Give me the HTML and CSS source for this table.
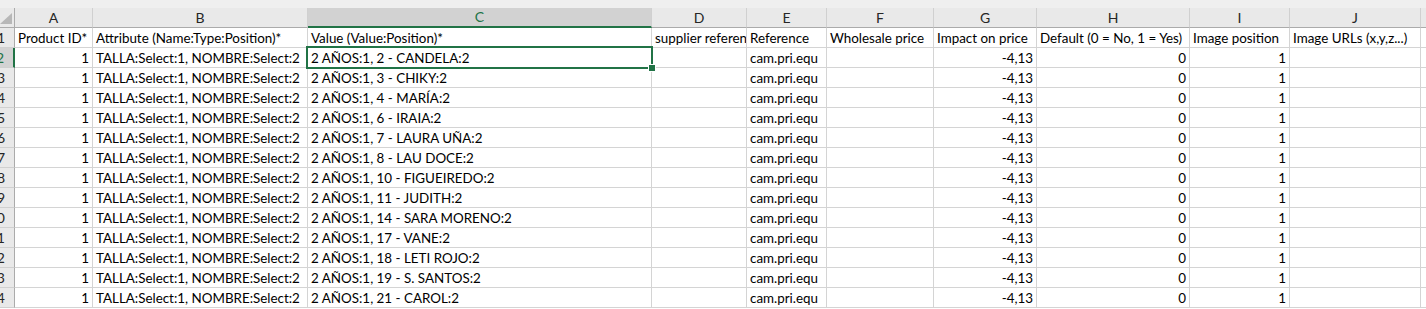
FILE: index.html
```html
<!DOCTYPE html>
<html>
<head>
<meta charset="utf-8">
<link rel="stylesheet" href="styles.css">
</head>
<body>
<div class="sheet">
  <div class="topstrip"></div>
  <div class="grid">
    <div class="corner"><span class="tri"></span></div>
    <div class="ch">A</div><div class="ch">B</div><div class="ch ch-sel">C</div><div class="ch">D</div><div class="ch">E</div><div class="ch">F</div><div class="ch">G</div><div class="ch">H</div><div class="ch">I</div><div class="ch">J</div><div class="ch ch-fill"></div>

    <div class="rh">1</div><div class="c">Product ID*</div><div class="c">Attribute (Name:Type:Position)*</div><div class="c">Value (Value:Position)*</div><div class="c">supplier reference</div><div class="c">Reference</div><div class="c">Wholesale price</div><div class="c">Impact on price</div><div class="c">Default (0 = No, 1 = Yes)</div><div class="c">Image position</div><div class="c">Image URLs (x,y,z...)</div><div class="c fill"></div>

    <div class="rh rh-sel">2</div><div class="c r">1</div><div class="c">TALLA:Select:1, NOMBRE:Select:2</div><div class="c sel">2 AÑOS:1, 2 - CANDELA:2<span class="selbox"><span class="handle"></span></span></div><div class="c"></div><div class="c">cam.pri.equ</div><div class="c"></div><div class="c r">-4,13</div><div class="c r">0</div><div class="c r">1</div><div class="c"></div><div class="c fill"></div>

    <div class="rh">3</div><div class="c r">1</div><div class="c">TALLA:Select:1, NOMBRE:Select:2</div><div class="c">2 AÑOS:1, 3 - CHIKY:2</div><div class="c"></div><div class="c">cam.pri.equ</div><div class="c"></div><div class="c r">-4,13</div><div class="c r">0</div><div class="c r">1</div><div class="c"></div><div class="c fill"></div>

    <div class="rh">4</div><div class="c r">1</div><div class="c">TALLA:Select:1, NOMBRE:Select:2</div><div class="c">2 AÑOS:1, 4 - MARÍA:2</div><div class="c"></div><div class="c">cam.pri.equ</div><div class="c"></div><div class="c r">-4,13</div><div class="c r">0</div><div class="c r">1</div><div class="c"></div><div class="c fill"></div>

    <div class="rh">5</div><div class="c r">1</div><div class="c">TALLA:Select:1, NOMBRE:Select:2</div><div class="c">2 AÑOS:1, 6 - IRAIA:2</div><div class="c"></div><div class="c">cam.pri.equ</div><div class="c"></div><div class="c r">-4,13</div><div class="c r">0</div><div class="c r">1</div><div class="c"></div><div class="c fill"></div>

    <div class="rh">6</div><div class="c r">1</div><div class="c">TALLA:Select:1, NOMBRE:Select:2</div><div class="c">2 AÑOS:1, 7 - LAURA UÑA:2</div><div class="c"></div><div class="c">cam.pri.equ</div><div class="c"></div><div class="c r">-4,13</div><div class="c r">0</div><div class="c r">1</div><div class="c"></div><div class="c fill"></div>

    <div class="rh">7</div><div class="c r">1</div><div class="c">TALLA:Select:1, NOMBRE:Select:2</div><div class="c">2 AÑOS:1, 8 - LAU DOCE:2</div><div class="c"></div><div class="c">cam.pri.equ</div><div class="c"></div><div class="c r">-4,13</div><div class="c r">0</div><div class="c r">1</div><div class="c"></div><div class="c fill"></div>

    <div class="rh">8</div><div class="c r">1</div><div class="c">TALLA:Select:1, NOMBRE:Select:2</div><div class="c">2 AÑOS:1, 10 - FIGUEIREDO:2</div><div class="c"></div><div class="c">cam.pri.equ</div><div class="c"></div><div class="c r">-4,13</div><div class="c r">0</div><div class="c r">1</div><div class="c"></div><div class="c fill"></div>

    <div class="rh">9</div><div class="c r">1</div><div class="c">TALLA:Select:1, NOMBRE:Select:2</div><div class="c">2 AÑOS:1, 11 - JUDITH:2</div><div class="c"></div><div class="c">cam.pri.equ</div><div class="c"></div><div class="c r">-4,13</div><div class="c r">0</div><div class="c r">1</div><div class="c"></div><div class="c fill"></div>

    <div class="rh">10</div><div class="c r">1</div><div class="c">TALLA:Select:1, NOMBRE:Select:2</div><div class="c">2 AÑOS:1, 14 - SARA MORENO:2</div><div class="c"></div><div class="c">cam.pri.equ</div><div class="c"></div><div class="c r">-4,13</div><div class="c r">0</div><div class="c r">1</div><div class="c"></div><div class="c fill"></div>

    <div class="rh">11</div><div class="c r">1</div><div class="c">TALLA:Select:1, NOMBRE:Select:2</div><div class="c">2 AÑOS:1, 17 - VANE:2</div><div class="c"></div><div class="c">cam.pri.equ</div><div class="c"></div><div class="c r">-4,13</div><div class="c r">0</div><div class="c r">1</div><div class="c"></div><div class="c fill"></div>

    <div class="rh">12</div><div class="c r">1</div><div class="c">TALLA:Select:1, NOMBRE:Select:2</div><div class="c">2 AÑOS:1, 18 - LETI ROJO:2</div><div class="c"></div><div class="c">cam.pri.equ</div><div class="c"></div><div class="c r">-4,13</div><div class="c r">0</div><div class="c r">1</div><div class="c"></div><div class="c fill"></div>

    <div class="rh">13</div><div class="c r">1</div><div class="c">TALLA:Select:1, NOMBRE:Select:2</div><div class="c">2 AÑOS:1, 19 - S. SANTOS:2</div><div class="c"></div><div class="c">cam.pri.equ</div><div class="c"></div><div class="c r">-4,13</div><div class="c r">0</div><div class="c r">1</div><div class="c"></div><div class="c fill"></div>

    <div class="rh">14</div><div class="c r">1</div><div class="c">TALLA:Select:1, NOMBRE:Select:2</div><div class="c">2 AÑOS:1, 21 - CAROL:2</div><div class="c"></div><div class="c">cam.pri.equ</div><div class="c"></div><div class="c r">-4,13</div><div class="c r">0</div><div class="c r">1</div><div class="c"></div><div class="c fill"></div>
  </div>
</div>
</body>
</html>
```
FILE: styles.css
```css
html, body {
  margin: 0;
  padding: 0;
  background: #ffffff;
}
.sheet {
  width: 1426px;
  height: 309px;
  overflow: hidden;
  font-family: Lato, "Liberation Sans", sans-serif;
  font-size: 13.4px;
  color: #000;
}
.topstrip {
  height: 8px;
  background: #efefef;
}
.grid {
  display: grid;
  grid-template-columns: 15px 78px 215px 344px 95px 80px 107px 103px 153px 100px 131px 1fr;
  grid-template-rows: 20px repeat(14, 20px);
}
.corner {
  background: #e9e9e9;
  border-right: 1px solid #ababab;
  border-bottom: 1px solid #ababab;
  position: relative;
  overflow: hidden;
}
.tri {
  position: absolute;
  right: 2px;
  bottom: 3px;
  width: 0;
  height: 0;
  border-left: 12px solid transparent;
  border-bottom: 11px solid #b7b7b7;
}
.ch {
  background: #e9e9e9;
  border-right: 1px solid #d0d0d0;
  border-bottom: 1px solid #ababab;
  display: flex;
  align-items: center;
  justify-content: center;
  color: #262626;
  line-height: 1;
  font-size: 14px;
}
.ch-sel {
  background: #d2d2d2;
  color: #217346;
  border-bottom: 2px solid #217346;
}
.ch-fill {
  border-right: 0;
}
.rh {
  background: #e9e9e9;
  border-right: 1px solid #ababab;
  border-bottom: 1px solid #d0d0d0;
  display: flex;
  align-items: center;
  justify-content: flex-end;
  padding-right: 9px;
  overflow: hidden;
  white-space: nowrap;
  color: #262626;
  box-sizing: border-box;
  font-size: 14px;
}
.rh-sel {
  background: #d2d2d2;
  color: #217346;
  border-right: 2px solid #217346;
}
.c {
  border-right: 1px solid #d4d4d4;
  border-bottom: 1px solid #d4d4d4;
  padding: 0 3px;
  display: flex;
  align-items: center;
  white-space: nowrap;
  overflow: hidden;
  line-height: 1;
  padding-top: 2px;
  box-sizing: border-box;
}
.r {
  justify-content: flex-end;
}
.fill {
  border-right: 0;
}
.sel {
  position: relative;
  overflow: visible;
}
.selbox {
  position: absolute;
  left: -2px;
  top: -2px;
  right: -2px;
  bottom: -2px;
  border: 2px solid #217346;
  z-index: 2;
}
.handle {
  position: absolute;
  right: -5px;
  bottom: -5px;
  width: 6px;
  height: 6px;
  background: #217346;
  border: 1px solid #fff;
}
```
